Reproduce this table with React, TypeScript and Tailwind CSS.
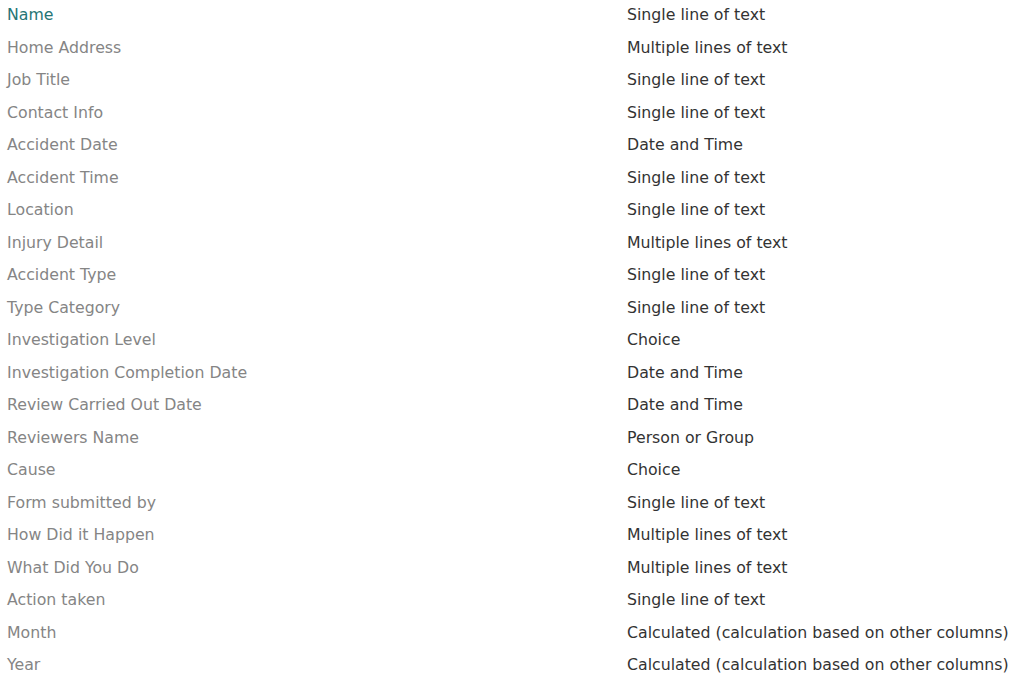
const FIELDS: [string, string][] = [
  ["Name", "Single line of text"],
  ["Home Address", "Multiple lines of text"],
  ["Job Title", "Single line of text"],
  ["Contact Info", "Single line of text"],
  ["Accident Date", "Date and Time"],
  ["Accident Time", "Single line of text"],
  ["Location", "Single line of text"],
  ["Injury Detail", "Multiple lines of text"],
  ["Accident Type", "Single line of text"],
  ["Type Category", "Single line of text"],
  ["Investigation Level", "Choice"],
  ["Investigation Completion Date", "Date and Time"],
  ["Review Carried Out Date", "Date and Time"],
  ["Reviewers Name", "Person or Group"],
  ["Cause", "Choice"],
  ["Form submitted by", "Single line of text"],
  ["How Did it Happen", "Multiple lines of text"],
  ["What Did You Do", "Multiple lines of text"],
  ["Action taken", "Single line of text"],
  ["Month", "Calculated (calculation based on other columns)"],
  ["Year", "Calculated (calculation based on other columns)"],
  ["Modified", ""],
];

export default function App() {
  return (
    <div className="h-[689px] overflow-hidden bg-white pl-[7px] font-['DejaVu_Sans',sans-serif] text-[15.75px]">
      <div className="-mt-px">
        {FIELDS.map(([name, type], i) => (
          <div key={name} className="flex h-[32.5px] items-center">
            <div className={`w-[620px] shrink-0 ${i === 0 ? "text-[#267575]" : "text-[#858585]"}`}>{name}</div>
            <div className="text-[#333333]">{type}</div>
          </div>
        ))}
      </div>
    </div>
  );
}
